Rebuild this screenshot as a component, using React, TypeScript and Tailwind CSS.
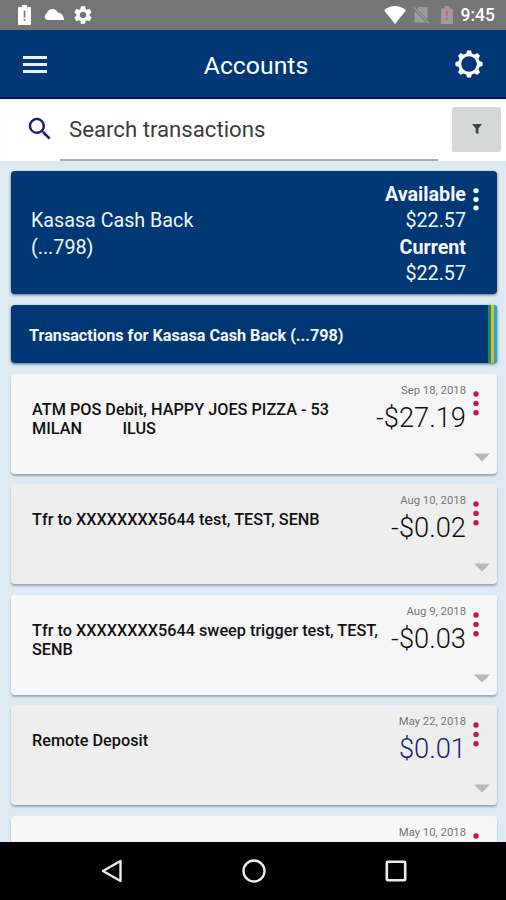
import React from 'react';
import { MdSettings, MdSearch } from 'react-icons/md';

interface Transaction {
  id: number;
  lines: string[];
  date: string;
  amount: string;
  credit?: boolean;
}

const transactions: Transaction[] = [
  { id: 1, lines: ['ATM POS Debit, HAPPY JOES PIZZA - 53', 'MILAN          ILUS'], date: 'Sep 18, 2018', amount: '-$27.19' },
  { id: 2, lines: ['Tfr to XXXXXXXX5644 test, TEST, SENB'], date: 'Aug 10, 2018', amount: '-$0.02' },
  { id: 3, lines: ['Tfr to XXXXXXXX5644 sweep trigger test, TEST,', 'SENB'], date: 'Aug 9, 2018', amount: '-$0.03' },
  { id: 4, lines: ['Remote Deposit'], date: 'May 22, 2018', amount: '$0.01', credit: true },
  { id: 5, lines: [], date: 'May 10, 2018', amount: '' },
];

const StatusBar = () => (
  <div className="flex h-[30px] shrink-0 items-center bg-[#757575] pr-[11px] pl-[18px] text-white">
    <svg className="h-[20px] w-[13px]" viewBox="0 0 13 20" fill="currentColor">
      <path d="M1 2h3V0h5v2h3a1 1 0 0 1 1 1v16a1 1 0 0 1-1 1H1a1 1 0 0 1-1-1V3a1 1 0 0 1 1-1z" />
      <path d="M5.700 5.500h1.600v7H5.700zM5.700 14h1.600v1.700H5.700z" fill="#757575" />
    </svg>
    <svg className="ml-[13px] h-[20px] w-[20px]" viewBox="0 0 20 20" fill="currentColor">
      <path d="M3 15a3.500 3.500 0 0 1-.3-6.500C4.500 2.700 11.500 2.500 14 7.600 17.500 8 19.800 11 20 15z" />
    </svg>
    <MdSettings className="ml-[8px] h-[22px] w-[22px]" />
    <div className="flex-1" />
    <svg className="h-[18px] w-[22px]" viewBox="0 0 22 18" fill="currentColor">
      <path d="M0 4.200Q11-4 22 4.200L11 18z" />
    </svg>
    <svg className="ml-[7px] h-[18px] w-[17px]" viewBox="0 0 17 18">
      <path d="M6 1h8.500v12.500L4 3zM1.500 4.500l11.500 12H1.500z" fill="#9c9c9c" />
      <path d="M1 1.500l14.500 15.500" stroke="#9c9c9c" strokeWidth="1.300" />
    </svg>
    <svg className="ml-[11px] h-[18px] w-[12px]" viewBox="0 0 12 18">
      <path d="M0 2.500h3.500V0h5v2.500H12V18H0z" fill="#9c9c9c" />
      <path d="M5 5h2v5.500H5zM5 12h2v2H5z" fill="#f0604f" />
    </svg>
    <span className="mt-[2px] ml-[8px] text-[17.5px] leading-none font-medium">9:45</span>
  </div>
);

const GearOutline = () => (
  <svg className="h-7 w-7" viewBox="0 0 28 28">
    <circle cx="14" cy="14" r="9.300" fill="none" stroke="white" strokeWidth="3" />
    {[0, 45, 90, 135, 180, 225, 270, 315].map((angle) => (
      <path key={angle} d="M11 4.500L12 .4h4l1 4.100z" fill="white" transform={`rotate(${angle} 14 14)`} />
    ))}
  </svg>
);

const Dots = ({ className = '' }: { className?: string }) => (
  <svg className={`w-[6px] ${className}`} viewBox="0 0 6 25" preserveAspectRatio="none" fill="currentColor">
    <circle cx="3" cy="3" r="2.700" />
    <circle cx="3" cy="12.400" r="2.700" />
    <circle cx="3" cy="21.800" r="2.700" />
  </svg>
);

const TransactionCard = ({ item, shaded }: { item: Transaction; shaded: boolean }) => (
  <div
    className={`flex h-[100px] shrink-0 rounded-[4px] pl-[21px] shadow-[0_2px_2px_rgba(70,90,100,0.45)] ${
      shaded ? 'bg-[#eeeeee]' : 'bg-[#f6f6f6]'
    }`}
  >
    <div className="w-0 flex-1 pt-[26px] text-[16.25px] leading-[19px] font-medium whitespace-pre text-[#111111]">
      {item.lines.map((line) => (
        <div key={line}>{line}</div>
      ))}
    </div>
    <div className="flex flex-col items-end pt-[10px]">
      <div className="text-[11.3px] leading-[14px] text-[#777777]">{item.date}</div>
      <div className={`mt-[4px] text-[27.3px] leading-[32px] font-[350] ${item.credit ? 'text-[#1a1f7c]' : 'text-[#111111]'}`}>
        {item.amount}
      </div>
    </div>
    <div className="flex w-[31px] flex-col pt-[17px]">
      <Dots className="ml-[7px] h-[25px] text-[#cf0f55]" />
      <svg className="mt-[37px] ml-[8px] h-[9px] w-[16px]" viewBox="0 0 16 9">
        <path d="M0 .5h16L8 8.500z" fill="#b8b8b8" />
      </svg>
    </div>
  </div>
);

const App: React.FC = () => {
  return (
    <div className="flex h-[900px] w-[506px] flex-col overflow-hidden bg-[#deeaf2] font-[Roboto,sans-serif]">
      <StatusBar />

      <header className="flex h-[69px] shrink-0 items-center justify-between border-b-2 border-[#000f62] bg-[#003876] pr-[23px] pl-[23px] text-white">
        <div className="mt-[1px] flex w-7 flex-col gap-[4px]">
          <div className="h-[3px] w-6 bg-[#f0f0fa]" />
          <div className="h-[3px] w-6 bg-[#f0f0fa]" />
          <div className="h-[3px] w-6 bg-[#f0f0fa]" />
        </div>
        <h1 className="pt-[5px] pl-[6px] text-[24.8px] leading-none">Accounts</h1>
        <GearOutline />
      </header>

      {/* search */}
      <div className="flex h-[62px] shrink-0 bg-white pr-[5px] pl-[24px] shadow-[inset_0_3px_3px_-1px_#f1ecf4]">
        <MdSearch className="mt-[15px] ml-px h-[30px] w-[30px] text-[#18206f]" />
        <div className="ml-[5px] flex w-[378px] items-center border-b-2 border-[#a4abb8] pt-[2px] pl-[9px] text-[22.2px] text-[#3c3c3c]">
          Search transactions
        </div>
        <button className="mt-[8px] ml-auto flex h-[45px] w-[49px] items-center justify-center rounded-[2px] bg-[#d6d8d8]" aria-label="Filter">
          <svg className="mb-[2px] h-[10px] w-[10px]" viewBox="0 0 10 10">
            <path d="M0 0h10L6.500 4.500V10L3.700 9V4.500z" fill="#444444" />
          </svg>
        </button>
      </div>

      <main className="flex h-[681px] shrink-0 flex-col overflow-hidden pt-[10px] pr-[9px] pl-[11px]">
        <section className="flex h-[123px] shrink-0 items-center rounded-[4px] bg-[#003876] pl-[20px] text-[19.7px] leading-[26.5px] text-[#f4f6fc] shadow-[0_1px_3px_rgba(0,20,60,0.6)]">
          <div className="flex-1 pt-[4px]">
            <div>Kasasa Cash Back</div>
            <div>(...798)</div>
          </div>
          <div className="pt-[4px] text-right">
            <div className="font-bold">Available</div>
            <div>$22.57</div>
            <div className="font-bold">Current</div>
            <div>$22.57</div>
          </div>
          <Dots className="mt-[17px] mr-[18px] ml-[7px] h-[23px] self-start text-white" />
        </section>

        <section className="mt-[11px] flex h-[58px] shrink-0 overflow-hidden rounded-[4px] bg-[#003876] pl-[18px] shadow-[0_1px_3px_rgba(0,20,60,0.6)]">
          <div className="flex-1 pt-[2px] text-[16.2px] leading-[58px] font-bold text-[#f4f6fc]">Transactions for Kasasa Cash Back (...798)</div>
          <div className="w-[3px] bg-[#278a5b]" />
          <div className="w-[3px] bg-[#d6bd3c]" />
          <div className="w-[3px] bg-[#2aa7cf]" />
        </section>

        <div className="mt-[11px] flex flex-col gap-[10.4px]">
          {transactions.map((item, index) => (
            <TransactionCard key={item.id} item={item} shaded={index % 2 === 1} />
          ))}
        </div>
      </main>

      {/* android navigation */}
      <nav className="flex h-[58px] shrink-0 items-center justify-between bg-black pr-[99px] pl-[100px]">
        <svg className="h-6 w-[23px]" viewBox="0 0 23 24">
          <path d="M20.500 2v20L3 12z" fill="none" stroke="#ececec" strokeWidth="2.400" strokeLinejoin="round" />
        </svg>
        <svg className="h-6 w-6" viewBox="0 0 24 24">
          <circle cx="12" cy="12" r="10.500" fill="none" stroke="#ececec" strokeWidth="2.400" />
        </svg>
        <svg className="h-[22px] w-[22px]" viewBox="0 0 22 22">
          <rect x="1.800" y="1.800" width="18.400" height="18.400" rx="1" fill="none" stroke="#ececec" strokeWidth="2.600" />
        </svg>
      </nav>
    </div>
  );
};

export default App;
